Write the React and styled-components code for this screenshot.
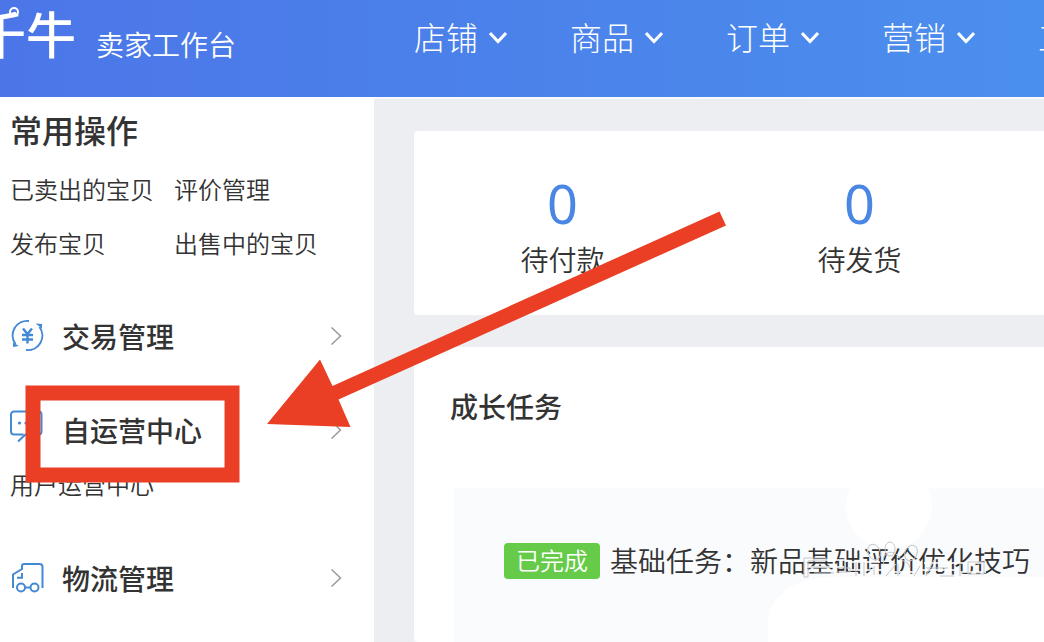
import React from 'react';
import styled, { createGlobalStyle } from 'styled-components';

const GlobalStyle = createGlobalStyle`
  * {
    box-sizing: border-box;
  }

  body {
    margin: 0;
    background: #eceef2;
    color: #333;
    font-family: 'Noto Sans CJK SC', sans-serif;
    font-weight: 350;
  }

  h1, h2, p, ul {
    margin: 0;
    padding: 0;
  }

  ul {
    list-style: none;
  }

  a {
    color: inherit;
    text-decoration: none;
  }

  button {
    border: none;
    background: none;
    padding: 0;
    color: inherit;
    font: inherit;
    cursor: pointer;
  }
`;

const Page = styled.div`
  position: relative;
  display: flex;
  flex-direction: column;
  height: 100vh;
  overflow: hidden;
`;

const Header = styled.header`
  display: flex;
  flex-shrink: 0;
  height: 97px;
  background: linear-gradient(90deg, #4c76e8 0%, #4b82ea 50%, #4b8fed 100%);
  color: #fff;
  overflow: hidden;
`;

const Brand = styled.div`
  position: relative;
  display: flex;
  flex-shrink: 0;
  width: 414px;
  white-space: nowrap;
`;

const Logo = styled.a`
  margin-left: -24px;
  width: 120px;
  font-size: 50px;
  font-weight: 500;
  line-height: 64px;
`;

const LogoCurl = styled.svg`
  position: absolute;
  top: 4px;
  left: 0;
`;

const BrandName = styled.span`
  font-size: 28px;
  line-height: 88px;
`;

const Nav = styled.nav`
  display: flex;
  gap: 63px;
  height: 72px;
`;

const NavButton = styled.button`
  display: flex;
  flex-shrink: 0;
  align-items: center;
  gap: 11px;
  font-size: 32px;
  font-weight: 300;
  line-height: 72px;

  svg {
    margin-top: 4px;
  }
`;

const Body = styled.div`
  display: flex;
  flex: 1;
  min-height: 0;
`;

const Sidebar = styled.aside`
  flex-shrink: 0;
  width: 374px;
  padding: 8px 32px 0 10px;
  background: #fff;
`;

const SideTitle = styled.h1`
  font-size: 32px;
  font-weight: 500;
  line-height: 48px;
`;

const QuickLinks = styled.ul`
  display: grid;
  grid-template-columns: 164px 1fr;
  padding-top: 9px;
  margin-bottom: 39px;
  font-size: 24px;
  line-height: 54px;
`;

const MenuRow = styled.button`
  display: flex;
  align-items: center;
  width: 100%;
  height: 54px;
  font-size: 28px;
  font-weight: 500;
  text-align: left;
`;

const MenuLabel = styled.span`
  flex: 1;
  margin-left: 18px;
`;

const MenuGroup = styled.div`
  margin-bottom: 40px;
`;

const SubLink = styled.a`
  display: block;
  font-size: 24px;
  line-height: 54px;
`;

const Main = styled.main`
  display: flex;
  flex: 1;
  flex-direction: column;
  min-width: 0;
  gap: 32px;
  padding: 32px 0 0 40px;
  border-top: 2px solid #f8fafc;
`;

const Card = styled.section`
  background: #fff;
  border-radius: 4px 0 0 4px;
`;

const Stats = styled(Card)`
  display: flex;
  height: 184px;
  overflow: hidden;
`;

const Stat = styled.a`
  display: flex;
  flex-direction: column;
  flex-shrink: 0;
  align-items: center;
  width: 297px;
  padding-top: 40px;
`;

const StatValue = styled.span`
  color: #4a87e4;
  font-family: 'Noto Sans', sans-serif;
  font-size: 54px;
  font-weight: 400;
  line-height: 64px;
`;

const StatLabel = styled.span`
  font-size: 28px;
  line-height: 48px;
`;

const Tasks = styled(Card)`
  display: flex;
  flex: 1;
  flex-direction: column;
  padding: 39px 0 0 36px;
`;

const TaskTitle = styled.h2`
  margin-bottom: 62px;
  font-size: 28px;
  font-weight: 500;
  line-height: 40px;
`;

const TaskPanel = styled.div`
  position: relative;
  flex: 1;
  margin-left: 4px;
  padding: 55px 0 0 50px;
  background: #fafbfd;
  overflow: hidden;
`;

const TaskRow = styled.div`
  display: flex;
  align-items: flex-start;
  gap: 10px;
  white-space: nowrap;
`;

const Badge = styled.span`
  height: 36px;
  padding: 0 12px;
  border-radius: 4px;
  background: #65cb49;
  color: #fff;
  font-size: 24px;
  line-height: 34px;
`;

const TaskName = styled.p`
  position: relative;
  z-index: 1;
  font-size: 28px;
  line-height: 34px;
`;

const Watermark = styled.svg`
  position: absolute;
  top: 0;
  left: 314px;
  z-index: ${(props) => (props.$over ? 2 : 0)};
`;

const Annotation = styled.svg`
  position: absolute;
  top: 0;
  left: 0;
  z-index: 3;
  pointer-events: none;
`;

const ChevronDown = () => (
  <svg width='18' height='14' viewBox='0 0 18 14' fill='none' stroke='#fff' strokeWidth='3'>
    <path d='M1 2l8 8.500 8-8.500' />
  </svg>
);

const ChevronRight = () => (
  <svg width='12' height='20' viewBox='0 0 12 20' fill='none' stroke='#999' strokeWidth='1.500'>
    <path d='M1.500 1.500L10.500 10l-9 8.500' />
  </svg>
);

const iconProps = {
  width: 34,
  height: 34,
  viewBox: '0 0 34 34',
  fill: 'none',
  stroke: '#4389d3',
  strokeWidth: 2,
  overflow: 'visible',
};

const TradeIcon = () => (
  <svg {...iconProps}>
    <path d='M19 2A14.500 14.500 0 0 0 5.500 25M16 31A14.500 14.500 0 0 0 29.500 8' />
    <path d='M3 23.500v4.500l6-1zM32 9.500V5l-6.500-.5z' fill='#4389d3' stroke='none' />
    <path d='M13 9.500l4.500 5.500 4.500-5.500M12 16h11M12 20.500h11M17.500 15v9.500' strokeWidth='2.400' />
  </svg>
);

const ChatIcon = () => (
  <svg {...iconProps}>
    <path d='M13.500 21.500H4a3 3 0 0 1-3-3V1.500a3 3 0 0 1 3-3h24.500a3 3 0 0 1 3 3v17a3 3 0 0 1-3 3H24M8 28.500l8-7.500' />
    <g fill='#4389d3' stroke='none'>
      <circle cx='9.500' cy='10' r='1.600' />
      <circle cx='16' cy='10' r='1.600' />
      <circle cx='22.500' cy='10' r='1.600' />
    </g>
  </svg>
);

const TruckIcon = () => (
  <svg {...iconProps}>
    <path d='M3 27V13.500L12 8V5a2 2 0 0 1 2-2h15.500a3 3 0 0 1 3 3v21M7 16.800h5V12' />
    <circle cx='11' cy='26.500' r='4' />
    <circle cx='24.500' cy='26.500' r='4' />
    <path d='M15 26.500h5.500' />
  </svg>
);

const navItems = ['店铺', '商品', '订单', '营销', '工具'];
const quickLinks = ['已卖出的宝贝', '评价管理', '发布宝贝', '出售中的宝贝'];
const stats = [
  { label: '待付款', value: 0 },
  { label: '待发货', value: 0 },
];
const menu = [
  { label: '交易管理', icon: TradeIcon, links: [] },
  { label: '自运营中心', icon: ChatIcon, links: ['用户运营中心'] },
  { label: '物流管理', icon: TruckIcon, links: [] },
];

export default function App() {
  return (
    <Page lang='zh-CN'>
      <GlobalStyle />
      <Header>
        <Brand>
          <Logo href='#'>千牛</Logo>
          <LogoCurl width='24' height='20' fill='none' stroke='#fff' strokeWidth='2'>
            <circle cx='14' cy='8' r='4' />
          </LogoCurl>
          <BrandName>卖家工作台</BrandName>
        </Brand>
        <Nav>
          {navItems.map((item) => (
            <NavButton key={item} type='button'>
              {item}
              <ChevronDown />
            </NavButton>
          ))}
        </Nav>
      </Header>
      <Body>
        <Sidebar>
          <SideTitle>常用操作</SideTitle>
          <QuickLinks>
            {quickLinks.map((link) => (
              <li key={link}>
                <a href='#'>{link}</a>
              </li>
            ))}
          </QuickLinks>
          {menu.map(({ label, icon: Icon, links }) => (
            <MenuGroup key={label}>
              <MenuRow type='button'>
                <Icon />
                <MenuLabel>{label}</MenuLabel>
                <ChevronRight />
              </MenuRow>
              {links.map((link) => (
                <SubLink key={link} href='#'>
                  {link}
                </SubLink>
              ))}
            </MenuGroup>
          ))}
        </Sidebar>
        <Main>
          <Stats>
            {stats.map(({ label, value }) => (
              <Stat key={label} href='#'>
                <StatValue>{value}</StatValue>
                <StatLabel>{label}</StatLabel>
              </Stat>
            ))}
          </Stats>
          <Tasks>
            <TaskTitle>成长任务</TaskTitle>
            <TaskPanel>
              <Watermark width='276' height='154' viewBox='0 0 276 154' fill='#fff'>
                <circle cx='121' cy='18' r='43' />
                <path d='M0 154v-20c0-26 28-45 64-45h212v65z' />
              </Watermark>
              <TaskRow>
                <Badge>已完成</Badge>
                <TaskName>基础任务：新品基础评价优化技巧</TaskName>
              </TaskRow>
              <Watermark $over width='276' height='154' viewBox='0 0 276 154' fill='none'>
                <g stroke='#fff' strokeWidth='2' opacity='0.8'>
                  <path d='M36 72h42M38 79h38M80 82h34M82 74h30M120 84h28M154 82h34M192 84h26M156 75h60' />
                </g>
                <g stroke='#c4c6ca' strokeWidth='1'>
                  <ellipse cx='106' cy='64' rx='6' ry='8' transform='rotate(-25 106 64)' />
                  <ellipse cx='122' cy='61' rx='5' ry='7' />
                  <ellipse cx='143' cy='65' rx='6' ry='8' transform='rotate(25 143 65)' />
                  <path d='M116 76c-4-10 8-16 14-8s10 4 12 12' />
                  <path d='M36 70h22v3H40v16h-4zM44 79h18M46 85h20M70 80h12v4H68M88 74v14M96 74v14M106 78v9M118 88l10-12M130 88V76M152 78l-6 10M158 80h22M166 72l-8 16M172 88h14M192 76v12M200 74h16v12h-16z' />
                </g>
              </Watermark>
            </TaskPanel>
          </Tasks>
        </Main>
      </Body>
      <Annotation width='740' height='500' viewBox='0 0 740 500'>
        <rect x='33' y='393' width='199' height='82' fill='none' stroke='#ea3e25' strokeWidth='15' />
        <path d='M267 424L320 359.500 332.500 386 719.500 211.500 726 225.500 338.500 399.500 350.500 427z' fill='#ea3e25' />
      </Annotation>
    </Page>
  );
}
